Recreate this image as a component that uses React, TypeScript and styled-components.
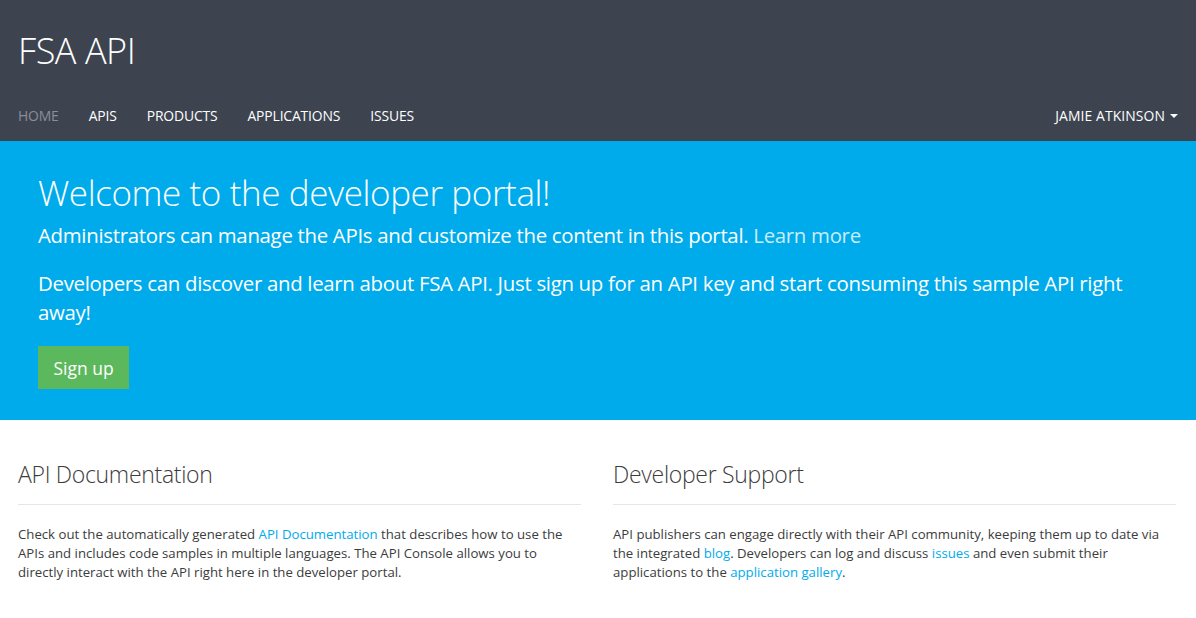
import React from "react";
import styled, { createGlobalStyle } from "styled-components";

const Global = createGlobalStyle`
  html, body { margin: 0; padding: 0; background: #fff; }
  body { font-family: "Open Sans", "Noto Sans", sans-serif; color: #3c3c3c; }
  * { box-sizing: border-box; }
`;

const Header = styled.header`
  background: #3d4450;
  height: 141px;
  display: flex;
  flex-direction: column;
  justify-content: space-between;
  padding: 0 18px;
`;

const Brand = styled.div`
  font-size: 36px;
  font-weight: 300;
  color: #fff;
  margin-top: 29px;
  line-height: 44px;
  letter-spacing: -0.45px;
`;

const NavBar = styled.nav`
  display: flex;
  justify-content: space-between;
  align-items: center;
  height: 50px;
  padding-bottom: 1px;
`;

const NavList = styled.ul`
  display: flex;
  list-style: none;
  margin: 0;
  padding: 0;
  gap: 30px;
`;

const NavItem = styled.li<{ $active?: boolean }>`
  font-size: 13.9px;
  text-transform: uppercase;
  color: ${(p) => (p.$active ? "#8a8f97" : "#fff")};
  letter-spacing: -0.15px;
`;

const UserMenu = styled.div`
  display: flex;
  align-items: center;
  gap: 5px;
  font-size: 13.9px;
  color: #fff;
  text-transform: uppercase;
  letter-spacing: 0.1px;
`;

const Caret = styled.span`
  width: 0;
  height: 0;
  border-left: 4px solid transparent;
  border-right: 4px solid transparent;
  border-top: 4px solid #fff;
`;

const Hero = styled.section`
  background: #00abeb;
  color: #fff;
  padding: 30px 38px 30px;
  height: 279px;
`;

const HeroTitle = styled.h1`
  margin: 0;
  font-size: 35px;
  font-weight: 300;
  line-height: 44px;
  letter-spacing: -0.4px;
`;

const HeroText = styled.p`
  margin: 6px 0 19px;
  font-size: 20.4px;
  line-height: 29px;
  letter-spacing: -0.3px;
  & + & { margin-top: 0; }
`;

const Muted = styled.a`
  color: #c9ecf9;
  text-decoration: none;
`;

const SignUp = styled.button`
  display: block;
  background: #5cb85c;
  color: #fff;
  border: none;
  font-family: inherit;
  font-size: 17.5px;
  width: 91px;
  height: 43px;
  padding: 0;
`;

const Columns = styled.main`
  display: grid;
  grid-template-columns: 1fr 1fr;
  gap: 32px;
  padding: 36px 20px 0 18px;
`;

const Column = styled.div``;

const ColTitle = styled.h2`
  margin: 0;
  font-size: 23px;
  font-weight: 300;
  line-height: 36px;
  color: #3c3c3c;
  padding-bottom: 12px;
  border-bottom: 1px solid #e6e6e6;
  letter-spacing: -0.3px;
`;

const ColText = styled.p`
  margin: 20px 0 0;
  font-size: 13.2px;
  line-height: 19px;
  color: #3c3c3c;
`;

const Link = styled.a`
  color: #00abec;
  text-decoration: none;
`;

export default function App() {
  return (
    <>
      <Global />
      <Header>
        <Brand>FSA API</Brand>
        <NavBar>
          <NavList>
            <NavItem $active>Home</NavItem>
            <NavItem>APIs</NavItem>
            <NavItem>Products</NavItem>
            <NavItem>Applications</NavItem>
            <NavItem>Issues</NavItem>
          </NavList>
          <UserMenu>
            Jamie Atkinson <Caret />
          </UserMenu>
        </NavBar>
      </Header>
      <Hero>
        <HeroTitle>Welcome to the developer portal!</HeroTitle>
        <HeroText>
          Administrators can manage the APIs and customize the content in this portal.{" "}
          <Muted>Learn more</Muted>
        </HeroText>
        <HeroText>
          Developers can discover and learn about FSA API. Just sign up for an API key and start
          consuming this sample API right away!
        </HeroText>
        <SignUp>Sign up</SignUp>
      </Hero>
      <Columns>
        <Column>
          <ColTitle>API Documentation</ColTitle>
          <ColText>
            Check out the automatically generated <Link>API Documentation</Link> that describes how
            to use the APIs and includes code samples in multiple languages. The API Console allows
            you to directly interact with the API right here in the developer portal.
          </ColText>
        </Column>
        <Column>
          <ColTitle>Developer Support</ColTitle>
          <ColText>
            API publishers can engage directly with their API community, keeping them up to date via
            the integrated <Link>blog</Link>. Developers can log and discuss <Link>issues</Link> and
            even submit their applications to the <Link>application gallery</Link>.
          </ColText>
        </Column>
      </Columns>
    </>
  );
}
